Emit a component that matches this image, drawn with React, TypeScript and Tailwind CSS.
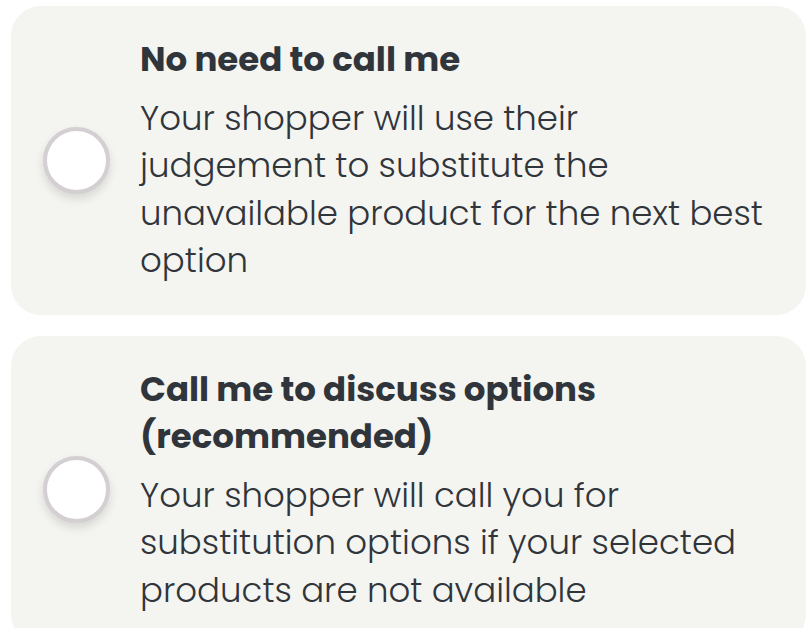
type Option = {
  id: string;
  title: string;
  body: string;
};

const options: Option[] = [
  {
    id: 'no-call',
    title: 'No need to call me',
    body: 'Your shopper will use their judgement to substitute the unavailable product for the next best option',
  },
  {
    id: 'call',
    title: 'Call me to discuss options (recommended)',
    body: 'Your shopper will call you for substitution options if your selected products are not available',
  },
];

const Radio = () => (
  <span className="block w-[67px] h-[67px] shrink-0 rounded-full bg-white border-[4px] border-[#d4cfd2] shadow-[0_5px_10px_rgba(0,0,0,0.12)]" />
);

export default function App() {
  return (
    <div className="min-h-screen bg-white pl-[11px] pr-[2px] pt-[6px] flex flex-col gap-[21px] text-[#30353b] font-['Poppins',sans-serif]">
      {options.map(opt => (
        <label
          key={opt.id}
          className="flex items-center bg-[#f4f4f0] rounded-[30px] pl-[32px] py-[30px] cursor-pointer"
        >
          <Radio />
          <div className="ml-[30px] flex flex-col gap-[11px] w-[630px]">
            <h3 className="text-[34px] leading-[47.5px] font-bold">{opt.title}</h3>
            <p className="text-[34px] leading-[47.5px] font-light">{opt.body}</p>
          </div>
        </label>
      ))}
    </div>
  );
}
